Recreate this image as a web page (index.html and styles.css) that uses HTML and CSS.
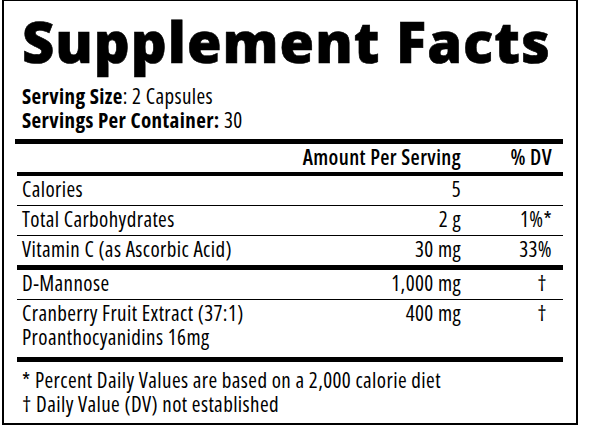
FILE: index.html
```html
<!DOCTYPE html>
<html lang="en">
<head>
    <meta charset="UTF-8">
    <title>Supplement Facts</title>
    <link rel="stylesheet" href="styles.css">
</head>
<body>
    <div class="label">
        <h1 class="title">Supplement Facts</h1>
        <div class="serving">
            <p><b>Serving Size</b>: 2 Capsules</p>
            <p><b>Servings Per Container:</b> 30</p>
        </div>
        <div class="facts">
            <div class="row row_head">
                <span class="name"></span>
                <span class="amount">Amount Per Serving</span>
                <span class="dv">% DV</span>
            </div>
            <div class="row">
                <span class="name">Calories</span>
                <span class="amount">5</span>
                <span class="dv"></span>
            </div>
            <div class="row">
                <span class="name">Total Carbohydrates</span>
                <span class="amount">2 g</span>
                <span class="dv">1%*</span>
            </div>
            <div class="row row_end">
                <span class="name">Vitamin C (as Ascorbic Acid)</span>
                <span class="amount">30 mg</span>
                <span class="dv">33%</span>
            </div>
            <div class="row">
                <span class="name">D-Mannose</span>
                <span class="amount">1,000 mg</span>
                <span class="dv dagger">†</span>
            </div>
            <div class="row row_end row_tall">
                <span class="name">Cranberry Fruit Extract (37:1)<br>Proanthocyanidins 16mg</span>
                <span class="amount">400 mg</span>
                <span class="dv dagger">†</span>
            </div>
        </div>
        <div class="notes">
            <p>* Percent Daily Values are based on a 2,000 calorie diet</p>
            <p>† Daily Value (DV) not established</p>
        </div>
    </div>
</body>
</html>
```
FILE: styles.css
```css
html, body {
    margin: 0;
    background-color: #fff;
}
body {
    color: #000;
    font-family: "Open Sans", "DejaVu Sans", sans-serif;
    font-stretch: 87.5%;
    font-size: 21px;
    line-height: 24px;
    letter-spacing: 0.4px;
}
p {
    margin: 0;
}
.label {
    width: 548px;
    margin-left: 2px;
    padding: 8px 13px 7px 11px;
    border: 2px solid #000;
    border-top-width: 1px;
}
.title {
    margin: 4px 0 14px 7px;
    font-size: 56px;
    line-height: 57px;
    font-weight: 800;
    font-stretch: 100%;
    letter-spacing: 1px;
    white-space: nowrap;
    -webkit-text-stroke: 0.6px #000;
}
.serving {
    padding-left: 7px;
    padding-bottom: 7px;
    border-bottom: 5px solid #000;
}
.serving b {
    font-weight: 700;
}
.facts {
    padding-left: 2px;
}
.row {
    display: flex;
    padding: 1px 11px 4px 5px;
    border-bottom: 1px solid #000;
}
.row_head {
    padding-bottom: 3px;
    border-bottom: 4px solid #000;
    font-weight: 600;
}
.row_end {
    border-bottom: 5px solid #000;
}
.row_tall {
    padding-bottom: 8px;
}
.name {
    flex: 1;
}
.amount {
    width: 200px;
    text-align: right;
}
.dv {
    width: 91px;
    text-align: right;
}
.dagger {
    padding-right: 5px;
    width: 86px;
}
.notes {
    padding: 6px 0 0 7px;
}
```
